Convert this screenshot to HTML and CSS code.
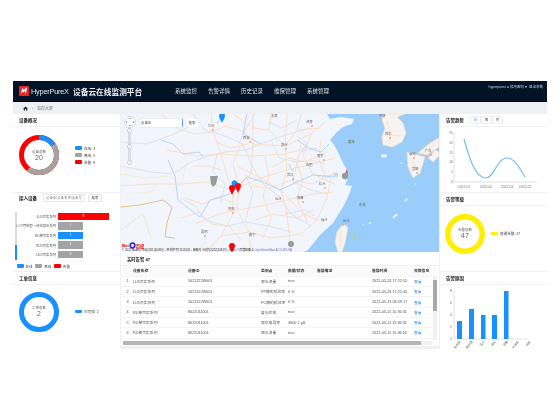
FILE: index.html
```html
<!DOCTYPE html>
<html lang="en">
<head>
    <meta charset="UTF-8">
    <title>HyperPureX 设备云在线监测平台</title>
    <link rel="stylesheet" href="styles.css">
</head>
<body>
<div class="app">
    <header class="topbar">
        <div class="logo-mark"><svg viewBox="0 0 10 10" width="8" height="8"><path d="M1 9 L3 1 L5 4 L7 1 L9 1 L7 9 L6 5 L4 7 L3 6 Z" fill="#fff"/></svg></div>
        <span class="brand">HyperPureX</span>
        <span class="title">设备云在线监测平台</span>
        <nav class="nav">
            <a>系统监控</a><a>告警详情</a><a>历史记录</a><a>维保管理</a><a>系统管理</a>
        </nav>
        <div class="user">hyperpurex ● 修改密码 ▾ &nbsp;退出系统</div>
    </header>
    <div class="crumb">
        <svg viewBox="0 0 10 10" width="5" height="5"><path d="M5 1 L10 5 H8.5 V9 H6 V6.5 H4 V9 H1.5 V5 H0 Z" fill="#333"/></svg>
        <span class="sep">/</span><span>监控大屏</span>
    </div>

    <div class="main">
        <div class="side">
            <section class="card">
                <div class="card-head"><h3>设备概况</h3></div>
                <div class="donut-row">
                    <div class="donut">
                        <svg viewBox="0 0 40 40" width="40" height="40">
                            <g fill="none" stroke-width="5" transform="rotate(-90 20 20)">
                                <circle cx="20" cy="20" r="17.5" stroke="#ff0000"/>
                                <circle cx="20" cy="20" r="17.5" stroke="#a3a3a3" stroke-dasharray="49.5 110" stroke-dashoffset="-16.5"/>
                                <circle cx="20" cy="20" r="17.5" stroke="#1890ff" stroke-dasharray="16.5 110"/>
                            </g>
                        </svg>
                        <div class="donut-text"><small>设备总数</small><b>20</b></div>
                    </div>
                    <ul class="legend">
                        <li><i class="blue"></i>在线: 3</li>
                        <li><i class="grey"></i>离线: 9</li>
                        <li><i class="red"></i>告警: 8</li>
                    </ul>
                </div>
            </section>
            <section class="card">
                <div class="card-head short">
                    <h3>接入设备</h3>
                    <span class="fake-input">设备ID/设备名称/设备号</span>
                    <span class="fake-btn">搜索</span>
                </div>
                <div class="bars">
                    <div class="bars-scroll"><div class="bars-thumb"></div></div>
                    <div class="bars-list">
                        <div class="bar-row"><label>LU5页实系列</label><span class="bar red" style="width:51px">8</span></div>
                        <div class="bar-row"><label>LCY管制型一体化高压系列</label><span class="bar grey" style="width:25px">1</span></div>
                        <div class="bar-row"><label>RU单页实系列</label><span class="bar blue" style="width:25px">1</span></div>
                        <div class="bar-row"><label>RU5页实系列</label><span class="bar grey" style="width:25px">1</span></div>
                        <div class="bar-row"><label>UD5页实系列</label><span class="bar grey" style="width:25px">1</span></div>
                    </div>
                </div>
                <div class="bars-legend">
                    <span><i class="blue"></i>在线</span><span><i class="grey"></i>离线</span><span><i class="red"></i>告警</span>
                </div>
            </section>
            <section class="card">
                <div class="card-head"><h3>工单信息</h3></div>
                <div class="donut-row low">
                    <div class="donut">
                        <svg viewBox="0 0 40 40" width="40" height="40"><circle cx="20" cy="20" r="17.5" fill="none" stroke="#1890ff" stroke-width="5"/></svg>
                        <div class="donut-text"><small>工单总数</small><b>2</b></div>
                    </div>
                    <ul class="legend"><li><i class="blue"></i>已完成: 2</li></ul>
                </div>
            </section>
        </div>

        <div class="center">
            <div class="map">
                <svg class="map-svg" viewBox="0 0 318 138" width="318" height="138">
                    <rect width="318" height="138" fill="#f3f5fc"/>
                    <path d="M206 0 L209 5 L219 3 L233 5 L231 10 L222 13 L216 18 L209 26 L212 29 L216 36 L222 49 L227 58 L227 64 L224 71 L231 72 L227 83 L222 93 L212 109 L199 121 L187 136 L182 138 H318 V0 Z" fill="#9acdfa"/>
                    <g fill="#f6f4f2" stroke="#fbdcc0" stroke-width=".7">
                        <path d="M262 0 L261 6 L264 14 L261 23 L262 31 L271 33 L281 28 L285 19 L282 9 L276 3 L284 0 Z"/>
                        <path d="M286 38 L304 43 L299 59 L292 64 L287 53 Z"/>
                        <path d="M297 39 L309 29 L318 24 V33 L306 41 Z"/>
                        <path d="M307 44 L314 36 L318 38 V42 L312 48 Z"/>
                        <path d="M222 110 L227 113 L224 129 L221 138 H217 L214 128 L216 118 Z"/>
                    </g>
                    <g fill="#fff">
                        <ellipse cx="263" cy="42" rx="3" ry="1.4"/>
                        <ellipse cx="274" cy="102" rx="3" ry=".9" transform="rotate(-45 274 102)"/>
                        <ellipse cx="285" cy="86" rx="2" ry=".7" transform="rotate(-45 285 86)"/>
                        <circle cx="249" cy="109" r=".9"/><circle cx="242" cy="111" r=".7"/><circle cx="294" cy="70" r=".7"/><circle cx="280" cy="49" r=".7"/>
                    </g>
                    <path d="M234 118 L233 126" stroke="#b8c98a" stroke-width="1"/>
                    <g fill="none" stroke="#d5d8e2" stroke-width=".7">
                        <path d="M0 52 L30 58 L52 60 L70 48 L88 42 L104 38 L125 36 L150 26 L168 20 L190 14"/>
                        <path d="M72 0 L84 16 L104 22 L122 30 L130 50 L142 70 L160 84 L170 100 L190 112"/>
                        <path d="M134 0 L124 16 L118 30 M150 26 L158 44 L176 48 L190 46 L204 50 M176 48 L172 68 L190 76 L206 80"/>
                        <path d="M60 84 L74 92 L84 106 L106 112 L124 108 L148 112 L170 118 M124 60 L132 78 L124 108"/>
                        <path d="M0 28 L26 30 L48 22 L70 12 M96 40 L92 58 L104 70 L100 88 M148 8 L160 14 L176 6"/>
                        <path d="M176 22 L186 30 L180 38 L196 34 M196 62 L214 70 M164 100 L184 96 L194 102"/>
                    </g>
                    <g fill="none" stroke="#fbdcc0" stroke-width=".9">
                        <path d="M40 0 L56 14 L74 20 L92 18 L104 12 L124 18 L132 30 L164 32 L190 20 L204 8"/>
                        <path d="M90 0 L92 18 L100 40 L106 62 L112 78 L112 100 L100 122 L84 138"/>
                        <path d="M132 0 L132 30 L130 60 L118 72 L116 96 L128 118 L130 138"/>
                        <path d="M166 0 L164 32 L166 56 L160 76 L166 100 L170 138"/>
                        <path d="M190 20 L182 42 L192 60 L210 64 L206 84 L196 106 L180 120"/>
                        <path d="M60 70 L84 68 L112 76 L140 64 L166 56 L192 50 L214 44"/>
                        <path d="M74 110 L98 100 L116 96 L140 92 L166 86 L192 80 L212 78"/>
                        <path d="M46 36 L76 42 L100 40 L130 42 L164 40 L186 34"/>
                        <path d="M100 122 L128 118 L150 124 L180 120 M0 72 L30 70 L60 70 M116 52 L140 64 L160 76 L180 98 L196 106"/>
                        <path d="M266 8 L270 20 L268 30 M264 20 L280 22 M290 44 L296 56 M300 40 L314 30"/>
                        <path d="M220 116 L219 132"/>
                        <path d="M150 0 L148 16 L164 32 L176 16 L180 0 M176 16 L200 14 M148 16 L132 14 L112 0"/>
                        <path d="M180 30 L176 50 L182 66 L176 84 L186 108 M200 26 L198 46 L204 62 L218 60"/>
                        <path d="M144 42 L148 62 L142 82 L150 104 L142 124 M120 30 L112 50 L118 72"/>
                        <path d="M64 84 L82 90 L98 84 L112 88 M60 104 L78 98 L90 110 L108 112 L120 126"/>
                        <path d="M130 72 L150 74 L170 66 L192 70 L214 58 M134 106 L152 100 L176 104 L192 96"/>
                        <path d="M150 54 L168 44 L184 48 L206 38 M94 28 L110 34 L126 30 M72 52 L88 52 L100 56"/>
                    </g>
                    <path d="M0 60 L24 64 L48 62 L60 70 M8 80 L30 78 L38 68 M60 30 L66 48 L60 70" fill="none" stroke="#f7e9cf" stroke-width=".8"/>
                    <g fill="none" stroke="#a9d2f7" stroke-width=".9">
                        <path d="M40 26 L52 30 L62 40 L78 38 L82 43"/>
                        <path d="M47 46 L54 62 L57 86 L79 103 L89 86 L109 80 L126 63 L142 68 L159 76 L176 68 L192 61 L214 63"/>
                        <path d="M126 0 L122 20 L140 30 M104 0 L96 10 M176 26 L188 34 L200 38 L208 30 M168 50 L172 58"/>
                    </g>
                    <path d="M0 93 L19 91 L42 86 L51 93 L46 109 L44 123 L54 124" fill="none" stroke="#d9c688" stroke-width="1"/>
                    <path d="M0 116 L22 100 L30 124 M76 138 L84 128" fill="none" stroke="#f5e2b8" stroke-width=".8"/>
                    <ellipse cx="215" cy="61" rx="2" ry="2.6" fill="#b8dcf8"/>
                    <path d="M225 55 L227 58 L226 64 L224 66 Z" fill="#e26060"/>
                    <g class="city" fill="#666" font-size="3.200">
                        <text x="87" y="13">兰州</text><text x="122" y="25">西安</text><text x="150" y="3">太原</text><text x="185" y="9">济南</text>
                        <text x="160" y="32">郑州</text><text x="196" y="43">南京</text><text x="185" y="52">合肥</text><text x="166" y="62">武汉</text>
                        <text x="107" y="96">贵阳</text><text x="80" y="119">昆明</text><text x="198" y="71">杭州</text><text x="176" y="85">南昌</text>
                        <text x="200" y="107">福州</text><text x="222" y="108">台北</text><text x="264" y="21">首尔</text><text x="258" y="3">平壤</text>
                        <text x="227" y="29">黄海</text><text x="238" y="92">东海</text><text x="128" y="122">南宁</text><text x="154" y="86">长沙</text>
                        <text x="288" y="41">福冈</text><text x="291" y="56">宫崎</text><text x="304" y="38">广岛</text>
                    </g>
                    <g fill="#e8743b">
                        <circle cx="92" cy="16" r=".8"/><circle cx="129" cy="28" r=".8"/><circle cx="191" cy="12" r=".8"/><circle cx="165" cy="35" r=".8"/>
                        <circle cx="203" cy="46" r=".8"/><circle cx="172" cy="65" r=".8"/><circle cx="112" cy="99" r=".8"/><circle cx="84" cy="122" r=".8"/>
                        <circle cx="204" cy="74" r=".8"/><circle cx="182" cy="88" r=".8"/><circle cx="222" cy="111" r=".8"/><circle cx="269" cy="24" r=".8"/>
                        <circle cx="293" cy="44" r=".8"/><circle cx="296" cy="59" r=".8"/><circle cx="310" cy="41" r=".8"/>
                    </g>
                    <g fill="#9a9a9a">
                        <path d="M89 62 H97 L95 70 L92 73 L90 70 Z"/>
                        <circle cx="224" cy="62" r="3.2"/>
                        <circle cx="170" cy="130" r="3"/>
                    </g>
                    <path d="M111 71 a3 3 0 1 1 5 0 L113.500 77 Z" fill="#1890ff"/>
                    <path d="M98 2 a3 3 0 0 1 6 0 c0 2 -2 4 -3 7 c-1 -3 -3 -5 -3 -7 Z" fill="#1890ff"/>
                    <path d="M108 74 a3 3 0 0 1 6 0 c0 2 -2 4 -3 7 c-1 -3 -3 -5 -3 -7 Z" fill="#f00"/>
                    <path d="M114 72 a3 3 0 0 1 6 0 c0 2 -2 4 -3 7 c-1 -3 -3 -5 -3 -7 Z" fill="#f00"/>
                    <path d="M108 132 a3 3 0 0 1 6 0 c0 2 -2 4 -3 7 c-1 -3 -3 -5 -3 -7 Z" fill="#f00"/>
                </svg>

                <svg class="map-nav" viewBox="0 0 12 12" width="12" height="12">
                    <circle cx="6" cy="6" r="5.500" fill="#fff" stroke="#c9cfe0" stroke-width=".8"/>
                    <path d="M6 1.500 L7.200 3 H4.800 Z M6 10.500 L7.200 9 H4.800 Z M1.500 6 L3 4.800 V7.200 Z M10.500 6 L9 4.800 V7.200 Z" fill="#6f93d8"/>
                </svg>
                <div class="map-zoom"><i></i><i></i><i></i></div>
                <div class="map-search">
                    <span class="map-input">设备ID</span>
                    <span class="map-btn">搜索</span>
                </div>
                <div class="baidu"><b>Bai</b><svg viewBox="0 0 10 10" width="7" height="7"><circle cx="5" cy="5" r="4.500" fill="#2932e1"/><circle cx="5" cy="5" r="2" fill="#fff"/></svg><b>百度</b></div>
                <div class="map-copy">© 2022 Baidu - GS(2021)6026号 - 甲测资字11111342 - 审图号 GS京(2022)1061号 - Data © 百度智图 &amp; <u>OpenStreetMap</u> &amp; <u>CC-BY-SA</u></div>
            </div>

            <div class="alarm-title">实时告警 47</div>
            <div class="alarm-table">
                <table>
                    <colgroup>
                        <col class="c-no"><col class="c-name"><col class="c-id"><col class="c-point"><col class="c-val"><col class="c-desc"><col class="c-time"><col class="c-link">
                    </colgroup>
                    <thead>
                        <tr><th></th><th>设备名称</th><th>设备ID</th><th>监测点</th><th>数据/状态</th><th>告警描述</th><th>告警时间</th><th>关联信息</th></tr>
                    </thead>
                    <tbody>
                        <tr><td>1</td><td>LU5页实系列</td><td>5021122W001</td><td>原水流量</td><td>true</td><td></td><td>2022-05-24 17:22:55</td><td><a>查看</a></td></tr>
                        <tr><td>2</td><td>LU5页实系列</td><td>5021122W001</td><td>PP膜的预处率</td><td>0 %</td><td></td><td>2022-05-24 17:22:45</td><td><a>查看</a></td></tr>
                        <tr><td>3</td><td>LU5页实系列</td><td>5021122W001</td><td>PC膜的预处率</td><td>0 %</td><td></td><td>2022-05-13 08:59:17</td><td><a>查看</a></td></tr>
                        <tr><td>4</td><td>RU单页实系列</td><td>8022011001</td><td>废水状态</td><td>true</td><td></td><td>2022-03-11 15:36:31</td><td><a>查看</a></td></tr>
                        <tr><td>5</td><td>RU单页实系列</td><td>8022011001</td><td>原水电导率</td><td>3000.2 μS</td><td></td><td>2022-03-11 15:36:31</td><td><a>查看</a></td></tr>
                        <tr><td>6</td><td>RU单页实系列</td><td>8022011001</td><td>原水流量</td><td>true</td><td></td><td>2022-03-11 15:36:16</td><td><a>查看</a></td></tr>
                    </tbody>
                </table>
                <div class="v-scroll"><div class="v-thumb"></div></div>
                <div class="h-scroll"><div class="h-thumb"></div></div>
            </div>
        </div>

        <div class="side">
            <section class="card">
                <div class="card-head">
                    <h3>告警趋势</h3>
                    <div class="tabs"><span class="on">日</span><span>周</span><span>月</span></div>
                </div>
                <svg class="chart" viewBox="0 0 106 64" width="106" height="64">
                    <g font-size="3.400" fill="#777" text-anchor="end">
                        <text x="13" y="7">25</text><text x="13" y="17">20</text><text x="13" y="27">15</text><text x="13" y="36">10</text><text x="13" y="46">5</text><text x="13" y="56">0</text>
                    </g>
                    <path d="M14 6 V55 H97" fill="none" stroke="#ccc" stroke-width=".6"/>
                    <path d="M24 12 C29 30 35 51 46 51 C54 51 57 31 67 31 C74 31 79 40 85 50" fill="none" stroke="#73bdf7" stroke-width="1.200"/>
                    <g font-size="3.400" fill="#777" text-anchor="middle">
                        <text x="24" y="61">2022-01</text><text x="46" y="61">2022-02</text><text x="67" y="61">2022-03</text><text x="85" y="61">2022-05</text>
                    </g>
                </svg>
            </section>
            <section class="card">
                <div class="card-head"><h3>告警等级</h3></div>
                <div class="donut-row tight">
                    <div class="donut">
                        <svg viewBox="0 0 40 40" width="40" height="40"><circle cx="20" cy="20" r="17.200" fill="none" stroke="#ffee00" stroke-width="5.500"/></svg>
                        <div class="donut-text"><small>告警总数</small><b>47</b></div>
                    </div>
                    <ul class="legend"><li><i class="yellow"></i>普通告警: 47</li></ul>
                </div>
            </section>
            <section class="card">
                <div class="card-head"><h3>告警原因</h3></div>
                <svg class="chart" viewBox="0 0 106 64" width="106" height="64">
                    <g font-size="3.400" fill="#777" text-anchor="end">
                        <text x="12" y="7">8</text><text x="12" y="19">6</text><text x="12" y="31">4</text><text x="12" y="43">2</text><text x="12" y="55">0</text>
                    </g>
                    <path d="M14 5 V54 H88" fill="none" stroke="#ccc" stroke-width=".6"/>
                    <g fill="#1890ff">
                        <rect x="17" y="36" width="5" height="18"/>
                        <rect x="29" y="24" width="5" height="30"/>
                        <rect x="41" y="30" width="4.500" height="24"/>
                        <rect x="52" y="30" width="5" height="24"/>
                        <rect x="64" y="6" width="4.500" height="48"/>
                    </g>
                    <g font-size="3" fill="#666" text-anchor="end">
                        <text transform="translate(21 57) rotate(-50)">电导率</text>
                        <text transform="translate(33 57) rotate(-50)">预处理</text>
                        <text transform="translate(45 57) rotate(-50)">压力</text>
                        <text transform="translate(56 57) rotate(-50)">液位</text>
                        <text transform="translate(68 57) rotate(-50)">流量</text>
                        <text transform="translate(79 57) rotate(-50)">水温高</text>
                        <text transform="translate(91 57) rotate(-50)">其他</text>
                    </g>
                </svg>
            </section>
        </div>
    </div>
</div>
</body>
</html>
```

FILE: styles.css
```css
body {
    margin: 0;
    padding-top: 81px;
    background: #fff;
    font-family: "Liberation Sans", "Noto Sans CJK SC", sans-serif;
    font-size: 4px;
    color: #444;
}
.app {
    width: 534px;
    margin-left: 13px;
    background: #eef0f4;
    filter: blur(0.3px);
}
.topbar {
    height: 21px;
    display: flex;
    align-items: center;
    padding-left: 6px;
    background: #021327;
    border-bottom: 1px solid #000;
    box-sizing: border-box;
    position: relative;
    color: #dfe5ec;
}
.logo-mark {
    width: 10px;
    height: 10px;
    flex: none;
    border-radius: 1px;
    background: #e8232a;
    display: flex;
    align-items: center;
    justify-content: center;
}
.brand {
    margin-left: 2px;
    width: 42px;
    flex: none;
    font-size: 7.300px;
    font-weight: 400;
    color: #e6e9ee;
    letter-spacing: -0.2px;
    white-space: nowrap;
}
.title {
    font-size: 7.700px;
    font-weight: 700;
    width: 102px;
    flex: none;
    white-space: nowrap;
    color: #eef1f4;
}
.nav {
    display: flex;
    gap: 11px;
    font-size: 5.500px;
}
.user {
    position: absolute;
    right: 4px;
    top: 3px;
    font-size: 3.500px;
    color: #cfd6de;
}
.crumb {
    height: 12px;
    display: flex;
    align-items: center;
    padding-left: 10px;
    gap: 4px;
    color: #777;
}
.crumb .sep {
    color: #aaa;
}
.main {
    display: grid;
    grid-template-columns: 107px 318px 107px;
    gap: 1px;
    height: 235px;
}
.side {
    display: grid;
    grid-template-rows: 77.5px 78px 77.5px;
    gap: 1px;
}
.card {
    background: #fff;
    overflow: hidden;
}
.card-head {
    height: 13px;
    display: flex;
    align-items: center;
    padding-left: 6px;
    border-bottom: 1px solid #f2f2f2;
    box-sizing: border-box;
}
.card-head.short {
    border-bottom: 0;
    height: 9px;
    margin-top: 1px;
}
h3 {
    margin: 0;
    font-size: 4.500px;
    font-weight: 700;
    color: #222;
}
.donut-row {
    display: flex;
    align-items: center;
    gap: 16px;
    padding: 8px 0 0 6px;
}
.donut-row.low {
    padding-top: 7px;
}
.donut-row.tight {
    gap: 6px;
    padding-left: 5px;
}
.donut {
    width: 40px;
    height: 40px;
    position: relative;
    flex: none;
}
.donut-text {
    position: absolute;
    inset: 0;
    display: flex;
    flex-direction: column;
    align-items: center;
    justify-content: center;
    color: #666;
}
.donut-text small {
    font-size: 3.500px;
}
.donut-text b {
    font-size: 7px;
    font-weight: 400;
    line-height: 8px;
}
.legend {
    list-style: none;
    margin: 0;
    padding: 0;
    display: flex;
    flex-direction: column;
    gap: 3px;
    font-size: 3.600px;
}
.legend li {
    display: flex;
    align-items: center;
    gap: 2px;
    height: 4px;
}
i.blue, i.grey, i.red, i.yellow {
    display: block;
    width: 7px;
    height: 3.500px;
    border-radius: 1px;
}
.blue { background: #1890ff; }
.grey { background: #a3a3a3; }
.red { background: #ff0000; }
.yellow { background: #ffee00; }
.fake-input {
    width: 42px;
    height: 8px;
    line-height: 7px;
    margin-left: 6px;
    text-align: center;
    font-size: 3.400px;
    color: #888;
    border: 1px solid #e6e6e6;
    box-sizing: border-box;
    border-radius: 1px;
    white-space: nowrap;
    overflow: hidden;
}
.fake-btn {
    width: 14px;
    height: 8px;
    line-height: 6px;
    margin-left: 3px;
    text-align: center;
    font-size: 3.400px;
    border: 1px solid #e6e6e6;
    box-sizing: border-box;
    border-radius: 1px;
}
.bars {
    display: flex;
    height: 57px;
    padding-top: 9px;
    box-sizing: border-box;
}
.bars-scroll {
    width: 2px;
    height: 48px;
    margin-left: 1.500px;
    background: #dcdcdc;
    display: flex;
    align-items: flex-end;
}
.bars-thumb {
    width: 2px;
    height: 15px;
    background: #1890ff;
}
.bars-list {
    flex: 1;
}
.bar-row {
    height: 9.600px;
    display: flex;
    align-items: center;
}
.bar-row label {
    width: 39.500px;
    margin-right: 2px;
    font-size: 3.300px;
    text-align: right;
    white-space: nowrap;
    color: #555;
}
.bar {
    height: 7.500px;
    line-height: 6.500px;
    text-align: center;
    color: #fff;
    font-size: 3.400px;
}
.bars-legend {
    display: flex;
    gap: 3px;
    padding: 4px 0 0 3.500px;
    font-size: 3.400px;
}
.bars-legend span {
    display: flex;
    align-items: center;
    gap: 2px;
}
.center {
    display: flex;
    flex-direction: column;
    background: #fff;
    height: 232px;
}
.map {
    height: 138px;
    position: relative;
    overflow: hidden;
    flex: none;
}
.map-svg {
    display: block;
}
.map-svg text {
    font-family: "Noto Sans CJK SC", sans-serif;
}
.map-nav {
    position: absolute;
    left: 3px;
    top: 2px;
}
.map-zoom {
    position: absolute;
    left: 7px;
    top: 14px;
    width: 2.500px;
    height: 37px;
    background: #d9dde8;
    display: flex;
    flex-direction: column;
    justify-content: space-between;
    align-items: center;
}
.map-zoom i {
    width: 5px;
    height: 5px;
    flex: none;
    border-radius: 50%;
    background: #fff;
    border: 1px solid #c3c9da;
    box-sizing: border-box;
}
.map-search {
    position: absolute;
    left: 19px;
    top: 5px;
    display: flex;
    gap: 3px;
    font-size: 3.400px;
}
.map-input {
    width: 43px;
    height: 8px;
    line-height: 8px;
    padding-left: 1px;
    box-sizing: border-box;
    background: #fff;
    border-radius: 1px;
    border-right: 1px solid #5aa3e8;
    box-shadow: 0 0 1px #999;
}
.map-btn {
    width: 12px;
    height: 8px;
    line-height: 8px;
    text-align: center;
    background: #fff;
    border-radius: 1px;
}
.baidu {
    position: absolute;
    left: 1px;
    bottom: 3px;
    display: flex;
    align-items: center;
    font-size: 4.300px;
    color: #e10601;
}
.map-copy {
    position: absolute;
    left: 1px;
    bottom: 0;
    font-size: 2.900px;
    white-space: nowrap;
    color: #333;
}
.map-copy u {
    color: #6a6ae0;
}
.alarm-title {
    height: 13px;
    display: flex;
    align-items: center;
    padding-left: 6px;
    font-size: 4.300px;
    font-weight: 700;
    color: #222;
    flex: none;
}
.alarm-table {
    position: relative;
    flex: 1;
    overflow: hidden;
    border-top: 1px solid #f1f1f1;
}
table {
    width: 314px;
    margin-left: 1px;
    table-layout: fixed;
    border-collapse: collapse;
    font-size: 3.800px;
}
.c-no { width: 11px; }
.c-name { width: 55px; }
.c-id { width: 73px; }
.c-point { width: 27px; }
.c-val { width: 29px; }
.c-desc { width: 55px; }
.c-time { width: 42px; }
.c-link { width: 22px; }
th, td {
    height: 10.300px;
    padding: 0;
    text-align: left;
    white-space: nowrap;
    overflow: hidden;
    border-bottom: 1px solid #f4f4f4;
    box-sizing: border-box;
    color: #555;
}
th {
    background: #fafafa;
    color: #333;
    font-weight: 700;
}
td:first-child {
    text-align: center;
}
td a {
    color: #1f7fd6;
}
.v-scroll {
    position: absolute;
    right: 2px;
    top: 10px;
    bottom: 6px;
    width: 4px;
    background: #f1f1f1;
}
.v-thumb {
    height: 31px;
    margin-top: 4px;
    background: #a8a8a8;
}
.h-scroll {
    position: absolute;
    left: 2px;
    right: 7px;
    bottom: 1px;
    height: 4px;
    background: #f1f1f1;
}
.h-thumb {
    height: 4px;
    width: 298px;
    background: #b4b4b4;
}
.tabs {
    display: flex;
    margin-left: 6px;
}
.tabs span {
    width: 11px;
    height: 8px;
    line-height: 7px;
    text-align: center;
    border: 1px solid #eee;
    box-sizing: border-box;
    font-size: 3.500px;
}
.tabs .on {
    color: #1890ff;
}
.chart {
    display: block;
}
```
